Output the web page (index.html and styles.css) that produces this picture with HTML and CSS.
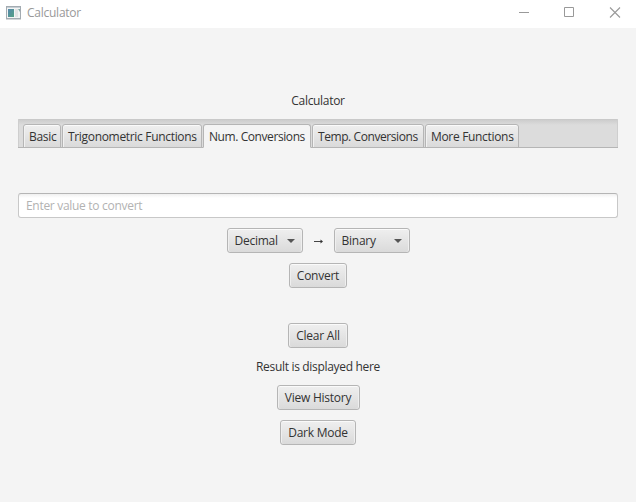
FILE: index.html
```html
<!DOCTYPE html>
<html lang="en">
<head>
<meta charset="utf-8">
<title>Calculator</title>
<link rel="stylesheet" href="styles.css">
</head>
<body>
<header class="titlebar">
  <svg class="app-icon" width="16" height="14" viewBox="0 0 16 14">
    <defs><linearGradient id="pane" x1="0" y1="0" x2="1" y2="1"><stop offset="0" stop-color="#5588ad"/><stop offset="1" stop-color="#55a184"/></linearGradient></defs>
    <rect x=".5" y=".5" width="14" height="12" fill="#f3f4f4" stroke="#a3abb1"/>
    <path d="M1 1.5h13" stroke="#c5ced4"/>
    <rect x="2" y="3" width="6" height="8" fill="url(#pane)"/>
    <rect x="9" y="3" width="3" height="8" fill="#e2e3e4"/>
    <path d="M12 3h2v3z" fill="#80aaa8"/>
    <path d="M0 13.5h15" stroke="#d3d6d8"/>
  </svg>
  <span class="title">Calculator</span>
  <svg class="controls" width="102" height="11" viewBox="0 0 102 11" fill="none" stroke="#999">
    <path d="M0 5.5h10M45.500.5h9v9h-9z"/>
    <path d="M91 .5l10 10M101 .5l-10 10" stroke-width="1.1"/>
  </svg>
</header>
<main>
  <div class="heading">Calculator</div>
  <nav class="tabs">
    <div class="tab basic"><span>Basic</span></div>
    <div class="tab trig"><span>Trigonometric Functions</span></div>
    <div class="tab num active"><span>Num. Conversions</span></div>
    <div class="tab temp"><span>Temp. Conversions</span></div>
    <div class="tab more"><span>More Functions</span></div>
  </nav>
  <input class="value" type="text" placeholder="Enter value to convert">
  <div class="units">
    <button class="btn combo"><span>Decimal</span><i class="caret"></i></button>
    <svg class="arrow" width="11" height="7" viewBox="0 0 11 7"><path d="M1 3.500h8" stroke="#444" fill="none"/><path d="M7.500 1.500l2.500 2-2.500 2z" fill="#333"/></svg>
    <button class="btn combo"><span>Binary</span><i class="caret"></i></button>
  </div>
  <button class="btn convert">Convert</button>
  <button class="btn clear">Clear All</button>
  <div class="result">Result is displayed here</div>
  <button class="btn history">View History</button>
  <button class="btn dark">Dark Mode</button>
</main>
</body>
</html>
```
FILE: styles.css
```css
* { box-sizing: border-box; }
body {
  margin: 0;
  height: 502px;
  overflow: hidden;
  background: #f4f4f4;
  color: #333;
  font: 12px/16px "Open Sans", "Noto Sans", sans-serif;
  letter-spacing: -0.32px;
}
.titlebar {
  height: 28px;
  background: #fff;
  display: flex;
  align-items: flex-start;
  padding: 5px 15px 0 6px;
  color: #999;
}
.app-icon { margin-top: 1px; }
.title { margin-left: 5px; letter-spacing: -0.25px; }
.controls { margin: 2px 0 0 auto; }
main {
  display: flex;
  flex-direction: column;
  align-items: center;
  padding: 65px 18px 0;
}
.heading { height: 26px; }
.tabs {
  width: 600px;
  height: 29px;
  padding: 5px 5px 0;
  display: flex;
  gap: 1px;
  background: linear-gradient(#cacaca, #dcdcdc 6px);
  box-shadow: inset 0 -1px #b5b5b5, inset 1px 0 #cecece, inset -1px 0 #cecece, inset 0 1px #c9c9c9;
}
.tab {
  height: 24px;
  border: 1px solid #b5b5b5;
  border-radius: 3px 3px 0 0;
  background: linear-gradient(#efefef, #dadada);
  box-shadow: inset 0 1px #fafafa, inset 1px 0 #f1f1f1;
  padding: 4px 0 0 5px;
  white-space: nowrap;
}
.tab.active { background: #f4f4f4; border-bottom-color: #f4f4f4; box-shadow: none; letter-spacing: -0.42px; }
.basic { width: 38px; }
.trig { width: 140px; }
.num { width: 108px; }
.temp { width: 112px; letter-spacing: -0.42px; }
.more { width: 94px; }
.value {
  margin-top: 45px;
  width: 600px;
  height: 25px;
  padding: 0 7px;
  border: 1px solid #c8c8c8;
  border-top-color: #b5b5b5;
  border-radius: 3px;
  background: linear-gradient(#f0f0f0, #fff 4px);
  font: inherit;
  letter-spacing: -0.32px;
  outline: 0;
}
.value::placeholder { color: #b2b2b2; opacity: 1; }
.units { display: flex; align-items: center; margin-top: 10px; }
.arrow { margin: 1px 10px 0; }
.btn {
  height: 25px;
  padding: 0;
  border: 1px solid #b5b5b5;
  border-radius: 3px;
  background: linear-gradient(#efefef, #dadada);
  box-shadow: inset 0 1px #fafafa, inset 1px 0 #efefef, inset -1px 0 #efefef;
  color: #333;
  font: inherit;
  letter-spacing: -0.25px;
  white-space: nowrap;
}
.combo { width: 76px; padding: 0 7px; display: flex; align-items: center; justify-content: space-between; }
.caret { border: 4px solid transparent; border-top-color: #555; border-bottom: 0; }
.convert { width: 58px; margin-top: 10px; }
.clear { width: 60px; margin-top: 35px; }
.result { height: 16px; margin-top: 11px; }
.history { width: 83px; margin-top: 10px; }
.dark { width: 76px; margin-top: 10px; }
.value::placeholder { letter-spacing: -0.3px; }
```
